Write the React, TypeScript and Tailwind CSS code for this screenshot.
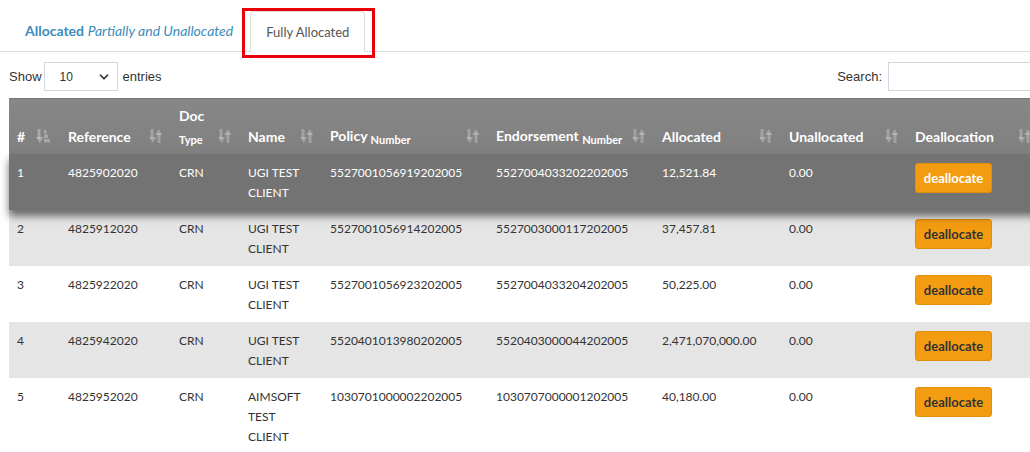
import { ChevronDown } from 'lucide-react'

const cols = 'grid grid-cols-[51px_111px_69px_82px_166px_166px_127px_126px_133px]'

const rows = [
    { n: '1', ref: '4825902020', doc: 'CRN', name: 'UGI TEST CLIENT', policy: '5527001056919202005', endorse: '5527004033202202005', alloc: '12,521.84', unalloc: '0.00' },
    { n: '2', ref: '4825912020', doc: 'CRN', name: 'UGI TEST CLIENT', policy: '5527001056914202005', endorse: '5527003000117202005', alloc: '37,457.81', unalloc: '0.00' },
    { n: '3', ref: '4825922020', doc: 'CRN', name: 'UGI TEST CLIENT', policy: '5527001056923202005', endorse: '5527004033204202005', alloc: '50,225.00', unalloc: '0.00' },
    { n: '4', ref: '4825942020', doc: 'CRN', name: 'UGI TEST CLIENT', policy: '5520401013980202005', endorse: '5520403000044202005', alloc: '2,471,070,000.00', unalloc: '0.00' },
    { n: '5', ref: '4825952020', doc: 'CRN', name: 'AIMSOFT TEST CLIENT', policy: '1030701000002202005', endorse: '1030707000001202005', alloc: '40,180.00', unalloc: '0.00' },
]

function SortIcon() {
    return (
        <svg width="13" height="16" viewBox="0 0 13 16" className="absolute right-[9px] bottom-[10px] text-white/25" fill="currentColor">
            <rect x="1.5" y="1" width="3" height="10" />
            <path d="M0 9h7.5l-3.75 6z" />
            <rect x="8.5" y="5" width="3" height="10" />
            <path d="M6 7h7.5l-3.75-6z" />
        </svg>
    )
}

function SortActiveIcon() {
    return (
        <svg width="14" height="16" viewBox="0 0 14 16" className="absolute right-[10px] bottom-[10px] text-white/30" fill="currentColor">
            <rect x="1.5" y="1" width="3" height="10" />
            <path d="M0 9h7.5l-3.75 6z" />
            <rect x="8" y="2" width="2.5" height="3.5" />
            <rect x="8" y="6.5" width="4" height="3.5" />
            <rect x="8" y="11" width="6" height="3.5" />
        </svg>
    )
}

function Th({ children, active }: { children: React.ReactNode; active?: boolean }) {
    return (
        <div className="relative flex items-end pl-2 pr-[30px] pb-[7px] text-[14px] font-bold leading-5 text-white">
            <div>{children}</div>
            {active ? <SortActiveIcon /> : <SortIcon />}
        </div>
    )
}

export default function App() {
    return (
        <div className="h-[452px] w-[1030px] overflow-hidden bg-white text-[12px] text-[#333] [font-family:Lato,sans-serif]">
            {/* tabs */}
            <div className="mt-[11px] flex border-b border-[#ddd] pl-[10px]">
                <div className="px-[15px] pt-[10px] pb-[10px] text-[14px] leading-5 text-[#3c8dbc]">
                    <span className="font-bold">Allocated</span> <i>Partially and Unallocated</i>
                </div>
                <div className="relative ml-[2px] -mb-px">
                    <div className="rounded-t-[4px] border border-b-0 border-[#ddd] bg-white px-[15px] pt-[10px] pb-[10px] text-[13px] leading-5 text-[#555]">
                        Fully Allocated
                    </div>
                    <div className="pointer-events-none absolute -left-[8px] -right-[10px] -top-[3px] -bottom-[6px] border-[3px] border-[#e8000b]" />
                </div>
            </div>

            {/* controls */}
            <div className="mt-[10px] flex w-[1040px] items-center justify-between pl-[9px] text-[13px] [font-family:'Liberation_Sans',Arial,sans-serif]">
                <div className="flex items-center">
                    <span>Show</span>
                    <div className="ml-[2px] mr-[5px] flex h-[29px] w-[74px] items-center justify-between border border-[#d2d6de] pl-[15px] pr-[6px] text-[12px]">
                        <span>10</span>
                        <ChevronDown size={14} strokeWidth={3} className="text-[#333]" />
                    </div>
                    <span>entries</span>
                </div>
                <div className="flex items-center">
                    <span>Search:</span>
                    <div className="ml-[6px] h-[29px] w-[152px] border border-[#d2d6de]" />
                </div>
            </div>

            {/* table */}
            <div className="mt-[7px] ml-[9px] w-[1040px]">
                <div className={`${cols} h-[56px] border-t border-[#777] bg-gradient-to-b from-[#878787] to-[#808080]`}>
                    <Th active>#</Th>
                    <Th>Reference</Th>
                    <Th>
                        Doc
                        <br />
                        <span className="relative top-[3px] text-[11px]">Type</span>
                    </Th>
                    <Th>Name</Th>
                    <Th>
                        Policy <span className="relative top-[3px] text-[11px]">Number</span>
                    </Th>
                    <Th>
                        Endorsement <span className="relative top-[3px] text-[11px]">Number</span>
                    </Th>
                    <Th>Allocated</Th>
                    <Th>Unallocated</Th>
                    <Th>Deallocation</Th>
                </div>

                {rows.map((r, i) => {
                    const hot = i === 0
                    const bg = hot ? 'bg-[#737373] text-white relative z-10 shadow-[0_6px_8px_rgba(0,0,0,0.55)]' : i % 2 === 1 ? 'bg-[#e5e5e5]' : 'bg-white'
                    return (
                        <div key={r.n} className={`${cols} min-h-[56px] leading-5 ${bg}`}>
                            <div className="px-2 pt-[9px] pb-[7px]">{r.n}</div>
                            <div className="px-2 pt-[9px] pb-[7px]">{r.ref}</div>
                            <div className="px-2 pt-[9px] pb-[7px]">{r.doc}</div>
                            <div className="px-2 pt-[9px] pb-[7px]">{r.name}</div>
                            <div className="px-2 pt-[9px] pb-[7px]">{r.policy}</div>
                            <div className="px-2 pt-[9px] pb-[7px]">{r.endorse}</div>
                            <div className="px-2 pt-[9px] pb-[7px]">{r.alloc}</div>
                            <div className="px-2 pt-[9px] pb-[7px]">{r.unalloc}</div>
                            <div className="px-2 pt-[9px]">
                                <button className={`h-[30px] w-[77px] rounded-[3px] border border-[#e08e0b] bg-[#f39c12] text-[13px] font-bold ${hot ? 'text-white' : 'text-[#333]'}`}>
                                    deallocate
                                </button>
                            </div>
                        </div>
                    )
                })}
            </div>
        </div>
    )
}
